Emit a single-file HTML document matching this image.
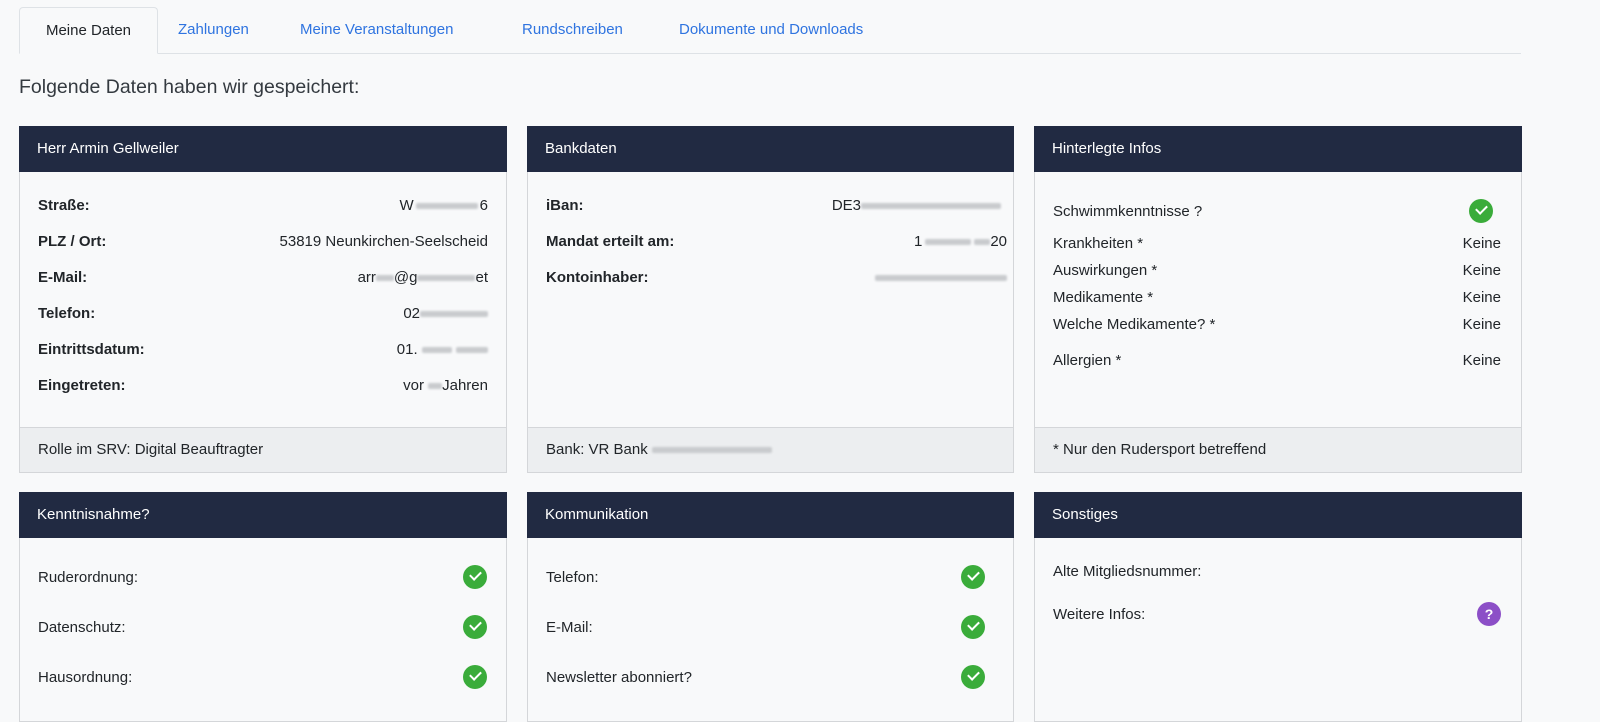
<!DOCTYPE html>
<html><head><meta charset="utf-8"><style>
*{box-sizing:border-box;margin:0;padding:0}
body{width:1600px;height:704px;overflow:hidden;background:#f8f9fa;font-family:"Liberation Sans",sans-serif;font-size:15px;color:#212529;position:relative}
.abs{position:absolute;white-space:nowrap}
.tabline{position:absolute;left:19px;top:53px;width:1502px;height:1px;background:#dee2e6}
.tab{position:absolute;top:7px;height:47px;line-height:46px;color:#2f74e0;font-size:15px}
.tab.act{left:19px;width:139px;border:1px solid #dee2e6;border-bottom:1px solid #f8f9fa;border-radius:4px 4px 0 0;text-align:center;color:#212529;background:#f8f9fa}
.card{position:absolute;border:1px solid #d4d6d9;background:#f8f9fa}
.hd{height:46px;background:#212a42;color:#fff;line-height:46px;padding-left:18px;font-size:15px;margin:-1px -1px 0 -1px}
.ft{position:absolute;left:0;right:0;bottom:0;height:45px;border-top:1px solid #d4d6d9;background:#eceef0;line-height:44px;padding-left:18px}
.l{position:absolute;left:18px;white-space:nowrap}
.b{font-weight:bold}
.r{position:absolute;right:18px;white-space:nowrap;text-align:right}
.blur{display:inline-block;height:6px;background:#c9cbce;vertical-align:middle;border-radius:2px;filter:blur(1px)}
.ok{position:absolute;width:24px;height:24px;border-radius:50%;background:#3aac3a}
.ok:after{content:"";position:absolute;left:7px;top:6px;width:9px;height:5px;border-left:2.5px solid #fff;border-bottom:2.5px solid #fff;transform:rotate(-45deg)}
.q{position:absolute;width:24px;height:24px;border-radius:50%;background:#8c4fc7;color:#fff;font-weight:bold;font-size:14px;text-align:center;line-height:24px}
</style></head><body>
<div class="tabline"></div>
<div class="tab act">Meine Daten</div>
<div class="tab" style="left:178px">Zahlungen</div>
<div class="tab" style="left:300px">Meine Veranstaltungen</div>
<div class="tab" style="left:522px">Rundschreiben</div>
<div class="tab" style="left:679px">Dokumente und Downloads</div>
<div class="abs" style="left:19px;top:76px;font-size:19.5px;color:#343a40">Folgende Daten haben wir gespeichert:</div>

<div class="card" style="left:19px;top:126px;width:488px;height:347px">
<div class="hd">Herr Armin Gellweiler</div>
<div class="l b" style="top:70px">Straße:</div><div class="r" style="top:70px">W<span class="blur" style="width:62px;margin:0 2px"></span>6</div>
<div class="l b" style="top:106px">PLZ / Ort:</div><div class="r" style="top:106px">53819 Neunkirchen-Seelscheid</div>
<div class="l b" style="top:142px">E-Mail:</div><div class="r" style="top:142px">arr<span class="blur" style="width:18px"></span>@g<span class="blur" style="width:58px"></span>et</div>
<div class="l b" style="top:178px">Telefon:</div><div class="r" style="top:178px">02<span class="blur" style="width:68px"></span></div>
<div class="l b" style="top:214px">Eintrittsdatum:</div><div class="r" style="top:214px">01. <span class="blur" style="width:30px"></span> <span class="blur" style="width:32px"></span></div>
<div class="l b" style="top:250px">Eingetreten:</div><div class="r" style="top:250px">vor <span class="blur" style="width:14px"></span>Jahren</div>
<div class="ft">Rolle im SRV: Digital Beauftragter</div>
</div>

<div class="card" style="left:527px;top:126px;width:487px;height:347px">
<div class="hd">Bankdaten</div>
<div class="l b" style="top:70px">iBan:</div><div class="r" style="top:70px;right:12px">DE3<span class="blur" style="width:140px"></span></div>
<div class="l b" style="top:106px">Mandat erteilt am:</div><div class="r" style="top:106px;right:6px">1<span class="blur" style="width:46px;margin:0 3px"></span><span class="blur" style="width:16px"></span>20</div>
<div class="l b" style="top:142px">Kontoinhaber:</div><div class="r" style="top:142px;right:6px"><span class="blur" style="width:132px"></span></div>
<div class="ft">Bank: VR Bank<span class="blur" style="width:120px;margin-left:4px"></span></div>
</div>

<div class="card" style="left:1034px;top:126px;width:488px;height:347px">
<div class="hd">Hinterlegte Infos</div>
<div class="l" style="top:76px">Schwimmkenntnisse ?</div><div class="ok" style="left:434px;top:72px"></div>
<div class="l" style="top:108px">Krankheiten *</div><div class="r" style="top:108px;right:20px">Keine</div>
<div class="l" style="top:135px">Auswirkungen *</div><div class="r" style="top:135px;right:20px">Keine</div>
<div class="l" style="top:162px">Medikamente *</div><div class="r" style="top:162px;right:20px">Keine</div>
<div class="l" style="top:189px">Welche Medikamente? *</div><div class="r" style="top:189px;right:20px">Keine</div>
<div class="l" style="top:225px">Allergien *</div><div class="r" style="top:225px;right:20px">Keine</div>
<div class="ft">* Nur den Rudersport betreffend</div>
</div>

<div class="card" style="left:19px;top:492px;width:488px;height:230px">
<div class="hd">Kenntnisnahme?</div>
<div class="l" style="top:76px">Ruderordnung:</div><div class="ok" style="left:443px;top:72px"></div>
<div class="l" style="top:126px">Datenschutz:</div><div class="ok" style="left:443px;top:122px"></div>
<div class="l" style="top:176px">Hausordnung:</div><div class="ok" style="left:443px;top:172px"></div>
</div>

<div class="card" style="left:527px;top:492px;width:487px;height:230px">
<div class="hd">Kommunikation</div>
<div class="l" style="top:76px">Telefon:</div><div class="ok" style="left:433px;top:72px"></div>
<div class="l" style="top:126px">E-Mail:</div><div class="ok" style="left:433px;top:122px"></div>
<div class="l" style="top:176px">Newsletter abonniert?</div><div class="ok" style="left:433px;top:172px"></div>
</div>

<div class="card" style="left:1034px;top:492px;width:488px;height:230px">
<div class="hd">Sonstiges</div>
<div class="l" style="top:70px">Alte Mitgliedsnummer:</div>
<div class="l" style="top:113px">Weitere Infos:</div><div class="q" style="left:442px;top:109px">?</div>
</div>
</body></html>
